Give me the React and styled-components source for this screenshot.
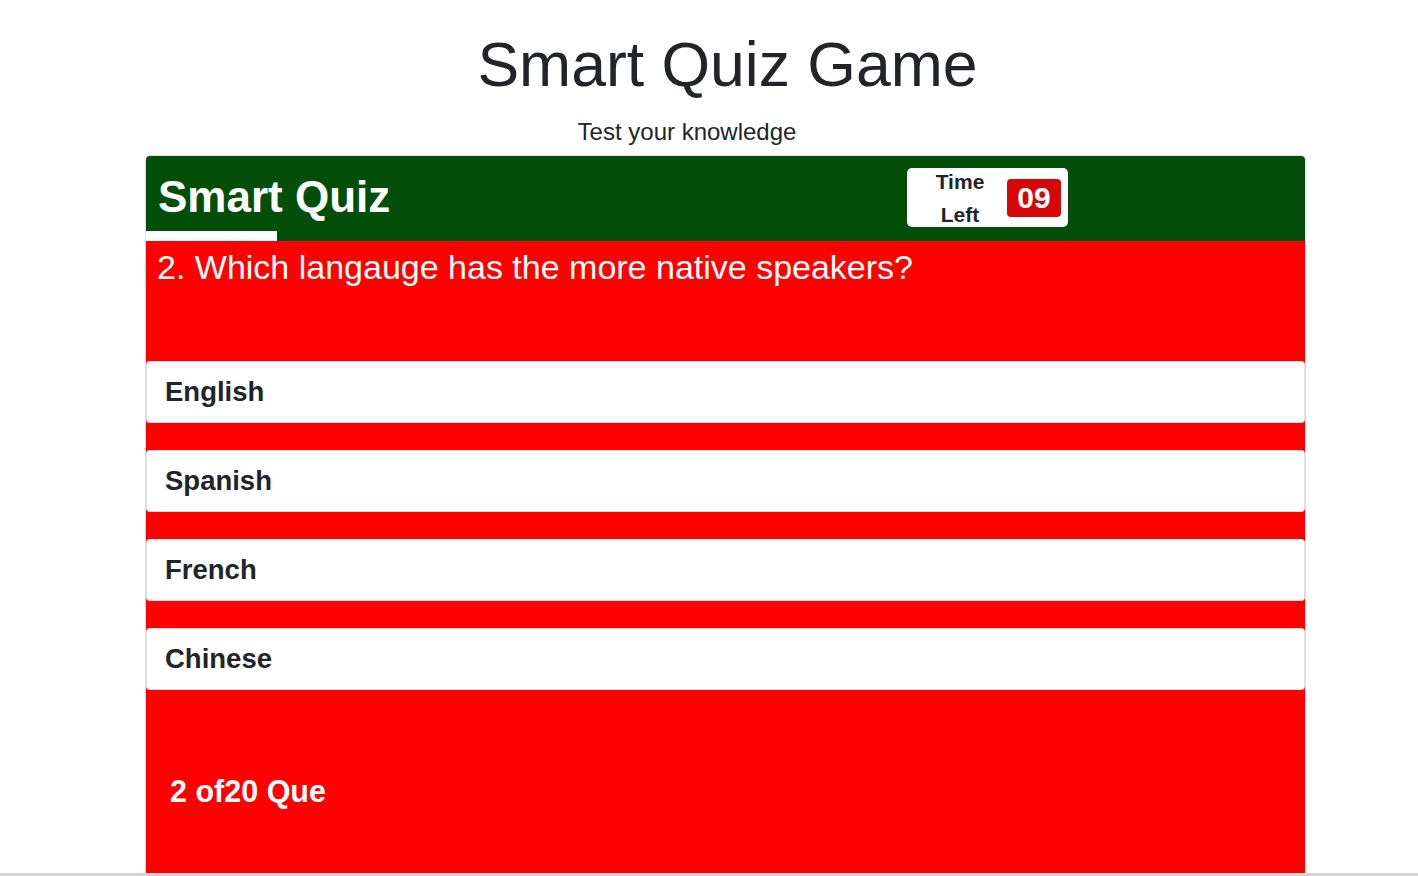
import React from 'react';
import styled, { createGlobalStyle } from 'styled-components';

/*
 quiz page : page heading, then the quiz card with a green header
 (title, progress bar, timer) and the red body with the question and answers
*/

const GlobalStyle = createGlobalStyle`
  html, body {
    margin: 0;
    padding: 0;
    height: 100%;
    overflow: hidden;
    background: #fff;
  }
  body {
    font-family: "Liberation Sans", Arial, sans-serif;
    color: #212529;
  }
`;

const Page = styled.div`
  display: flex;
  flex-direction: column;
  height: 876px;
`;

const Wrapper = styled.div`
  width: 1161px;
  margin-left: 145px;
  display: flex;
  flex-direction: column;
  flex: 1;
  min-height: 0;
`;

const Heading = styled.h1`
  margin: 27px 0 0;
  font-size: 62.5px;
  font-weight: 400;
  line-height: 1.2;
  text-align: center;
  padding-left: 4px;
`;

const Subtitle = styled.p`
  margin: 12px 0 5px;
  font-size: 24px;
  line-height: 1.5;
  text-align: center;
  padding-right: 77px;
`;

const Card = styled.div`
  flex: 1;
  min-height: 0;
  display: flex;
  flex-direction: column;
  border: 1px solid rgba(0, 0, 0, 0.125);
  border-bottom: 0;
  border-radius: 5px 5px 0 0;
  overflow: hidden;
`;

const CardHeader = styled.div`
  background: #034f09;
  display: flex;
  flex-direction: column;
`;

const HeaderRow = styled.div`
  display: grid;
  grid-template-columns: 760px auto;
  align-items: center;
  padding: 12px 0 4px;
`;

const QuizTitle = styled.h2`
  margin: 0;
  padding-left: 12px;
  font-size: 44px;
  font-weight: 700;
  line-height: 1.2;
  color: #fff;
`;

const Timer = styled.div`
  justify-self: start;
  display: flex;
  align-items: center;
  width: 161px;
  height: 59px;
  margin-left: 1px;
  background: #fff;
  border-radius: 5px;
`;

const TimerLabel = styled.div`
  width: 100px;
  padding-left: 6px;
  box-sizing: border-box;
  text-align: center;
  font-size: 21px;
  font-weight: 700;
  line-height: 33px;
  color: #212529;
`;

const TimerCount = styled.div`
  width: 54px;
  height: 38px;
  display: flex;
  align-items: center;
  justify-content: center;
  background: #d40606;
  border-radius: 4px;
  color: #fff;
  font-size: 30px;
  font-weight: 700;
`;

const Progress = styled.div`
  height: 10px;
  background: #fff;
`;

const CardBody = styled.div`
  flex: 1;
  display: flex;
  flex-direction: column;
  background: #ff0000;
`;

const Question = styled.h3`
  margin: 0;
  height: 120px;
  box-sizing: border-box;
  padding: 6px 11px 0;
  font-size: 34px;
  font-weight: 400;
  line-height: 1.2;
  color: #fff;
`;

const Options = styled.div`
  display: flex;
  flex-direction: column;
  gap: 27px;
`;

const Option = styled.button`
  display: flex;
  align-items: center;
  height: 62px;
  width: 100%;
  padding: 0 18px;
  margin: 0;
  border: 1px solid rgba(0, 0, 0, 0.125);
  border-radius: 4px;
  background: #fff;
  font-family: inherit;
  font-size: 27.5px;
  font-weight: 700;
  color: #212529;
  text-align: left;
  cursor: pointer;
`;

const Footer = styled.div`
  padding: 83px 24px 0;
  font-size: 30.5px;
  font-weight: 700;
  line-height: 1.2;
  color: #fff;
`;

const BottomRule = styled.div`
  height: 3px;
  background: #d4d4d4;
  flex-shrink: 0;
`;

const options = ['English', 'Spanish', 'French', 'Chinese'];

export default function App() {
  const current = 2;
  const total = 20;
  const progress = 11.3;

  return (
    <Page>
      <GlobalStyle />
      <Wrapper>
        <Heading>Smart Quiz Game</Heading>
        <Subtitle>Test your knowledge</Subtitle>
        <Card>
          <CardHeader>
            <HeaderRow>
              <QuizTitle>Smart Quiz</QuizTitle>
              <Timer>
                <TimerLabel>
                  Time
                  <br />
                  Left
                </TimerLabel>
                <TimerCount>09</TimerCount>
              </Timer>
            </HeaderRow>
            <Progress style={{ width: `${progress}%` }} />
          </CardHeader>
          <CardBody>
            <Question>{current}. Which langauge has the more native speakers?</Question>
            <Options>
              {options.map(option => (
                <Option key={option}>{option}</Option>
              ))}
            </Options>
            <Footer>
              {current} of{total} Que
            </Footer>
          </CardBody>
        </Card>
      </Wrapper>
      <BottomRule />
    </Page>
  );
}
